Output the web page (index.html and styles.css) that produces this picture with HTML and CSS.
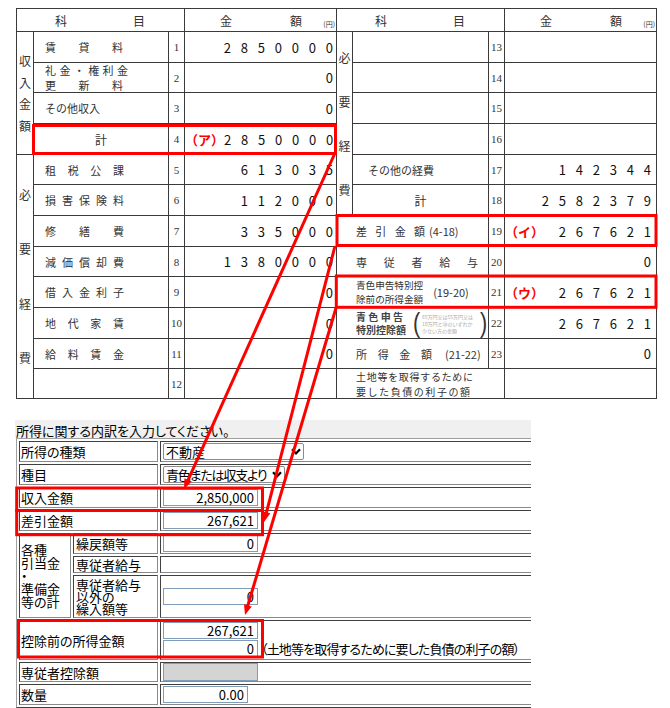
FILE: index.html
```html
<!DOCTYPE html>
<html lang="ja">
<head>
<meta charset="utf-8">
<title>所得の内訳</title>
<link rel="stylesheet" href="styles.css">
</head>
<body>
<div class="page">
  <div class="sheet">
    <!-- header -->
    <div class="hd s3 hk"><span class="jh">科目</span></div>
    <div class="hd ha"><span class="ja">金額</span><small>(円)</small></div>
    <div class="hd s3 hk"><span class="jh">科目</span></div>
    <div class="hd ha"><span class="ja">金額</span><small>(円)</small></div>

    <!-- row 1 / 13 -->
    <div class="vl vl4"><span>収</span><span>入</span><span>金</span><span>額</span></div>
    <div class="it"><span class="j w78">賃貸料</span></div>
    <div class="no">1</div>
    <div class="amt"><span class="d">2850000</span></div>
    <div class="vl vl6"><span>必</span><span>要</span><span>経</span><span>費</span></div>
    <div class="it"></div>
    <div class="no">13</div>
    <div class="amt r"></div>

    <!-- row 2 / 14 -->
    <div class="it two"><span class="j w83">礼金・権利金</span><span class="j w78">更新料</span></div>
    <div class="no">2</div>
    <div class="amt"><span class="d">0</span></div>
    <div class="it"></div>
    <div class="no">14</div>
    <div class="amt r"></div>

    <!-- row 3 / 15 -->
    <div class="it"><span>その他収入</span></div>
    <div class="no">3</div>
    <div class="amt"><span class="d">0</span></div>
    <div class="it"></div>
    <div class="no">15</div>
    <div class="amt r"></div>

    <!-- row 4 / 16 -->
    <div class="it c"><span>計</span></div>
    <div class="no">4</div>
    <div class="amt tag"><span class="t">（ア）</span><span class="d">2850000</span></div>
    <div class="it"></div>
    <div class="no">16</div>
    <div class="amt r"></div>

    <!-- row 5 / 17 -->
    <div class="vl vl8"><span>必</span><span>要</span><span>経</span><span>費</span></div>
    <div class="it"><span class="j w79">租税公課</span></div>
    <div class="no">5</div>
    <div class="amt"><span class="d">613035</span></div>
    <div class="it i17"><span>その他の経費</span></div>
    <div class="no">17</div>
    <div class="amt r"><span class="d">142344</span></div>

    <!-- row 6 / 18 -->
    <div class="it"><span class="j w79">損害保険料</span></div>
    <div class="no">6</div>
    <div class="amt"><span class="d">112000</span></div>
    <div class="it c"><span>計</span></div>
    <div class="no">18</div>
    <div class="amt r"><span class="d">2582379</span></div>

    <!-- row 7 / 19 -->
    <div class="it"><span class="j w79">修繕費</span></div>
    <div class="no">7</div>
    <div class="amt"><span class="d">335000</span></div>
    <div class="it s2 ir"><span class="j w69">差引金額</span><span class="pn">(4-18)</span></div>
    <div class="no">19</div>
    <div class="amt r tag"><span class="t">（イ）</span><span class="d">267621</span></div>

    <!-- row 8 / 20 -->
    <div class="it"><span class="j w79">減価償却費</span></div>
    <div class="no">8</div>
    <div class="amt"><span class="d">1380000</span></div>
    <div class="it s2 ir"><span class="j w122">専従者給与</span></div>
    <div class="no">20</div>
    <div class="amt r"><span class="d">0</span></div>

    <!-- row 9 / 21 -->
    <div class="it"><span class="j w79">借入金利子</span></div>
    <div class="no">9</div>
    <div class="amt"><span class="d">0</span></div>
    <div class="it s2 ir"><span class="sm2"><span>青色申告特別控</span><span>除前の所得金額</span></span><span class="pn p1920">(19-20)</span></div>
    <div class="no">21</div>
    <div class="amt r tag"><span class="t">（ウ）</span><span class="d">267621</span></div>

    <!-- row 10 / 22 -->
    <div class="it"><span class="j w79">地代家賃</span></div>
    <div class="no">10</div>
    <div class="amt"><span class="d">0</span></div>
    <div class="it s2 ir"><span class="sm3"><span class="j w47">青色申告</span><span class="j w47">特別控除額</span></span><span class="par pl">(</span><span class="tiny"><span>65万円又は55万円又は</span><span>10万円と⑳のいずれか</span><span>少ない方の金額</span></span><span class="par">)</span></div>
    <div class="no">22</div>
    <div class="amt r"><span class="d">267621</span></div>

    <!-- row 11 / 23 -->
    <div class="it"><span class="j w79">給料賃金</span></div>
    <div class="no">11</div>
    <div class="amt"><span class="d">0</span></div>
    <div class="it s2 ir"><span class="j w76">所得金額</span><span class="pn p2122">(21-22)</span></div>
    <div class="no">23</div>
    <div class="amt r"><span class="d">0</span></div>

    <!-- row 12 / land -->
    <div class="it"></div>
    <div class="no">12</div>
    <div class="amt"></div>
    <div class="it s3 ir"><span class="land"><span class="j w117">土地等を取得するために</span><span class="j w114">要した負債の利子の額</span></span></div>
    <div class="amt r"></div>
  </div>

  <div class="entry">
    <div class="cap">所得に関する内訳を入力してください。</div>
    <table class="form">
      <colgroup><col class="c1"><col class="c2"><col class="c3"></colgroup>
      <tr>
        <td colspan="2"><div class="lb h19">所得の種類</div></td>
        <td><div class="v h19"><div class="sel s141"><span>不動産</span><svg class="chev" width="10" height="7" viewBox="0 0 10 7"><polyline points="1,1.2 5,5.4 9,1.2"/></svg></div></div></td>
      </tr>
      <tr>
        <td colspan="2"><div class="lb h19">種目</div></td>
        <td><div class="v h19"><div class="sel s122"><span>青色または収支より</span><svg class="chev" width="10" height="7" viewBox="0 0 10 7"><polyline points="1,1.2 5,5.4 9,1.2"/></svg></div></div></td>
      </tr>
      <tr>
        <td colspan="2"><div class="lb h19">収入金額</div></td>
        <td><div class="v h19"><div class="inp">2,850,000</div></div></td>
      </tr>
      <tr>
        <td colspan="2"><div class="lb h19">差引金額</div></td>
        <td><div class="v h19"><div class="inp">267,621</div></div></td>
      </tr>
      <tr>
        <td rowspan="3" class="grp">各種<br>引当金<br>・<br>準備金<br>等の計</td>
        <td><div class="lb sub h19">繰戻額等</div></td>
        <td><div class="v h19"><div class="inp">0</div></div></td>
      </tr>
      <tr>
        <td><div class="lb sub h15">専従者給与</div></td>
        <td><div class="v h15"></div></td>
      </tr>
      <tr>
        <td><div class="lb sub ml h41">専従者給与<br>以外の<br>繰入額等</div></td>
        <td><div class="v h41"><div class="inp">0</div></div></td>
      </tr>
      <tr>
        <td colspan="2"><div class="lb h38">控除前の所得金額</div></td>
        <td><div class="vpair">
          <div class="inp">267,621</div>
          <div class="line2"><div class="inp">0</div><span class="note">（土地等を取得するために要した負債の利子の額）</span></div>
        </div></td>
      </tr>
      <tr>
        <td colspan="2"><div class="lb h18">専従者控除額</div></td>
        <td><div class="v h18"><div class="inp dis"></div></div></td>
      </tr>
      <tr>
        <td colspan="2"><div class="lb h19">数量</div></td>
        <td><div class="v h19"><div class="inp w85">0.00</div></div></td>
      </tr>
    </table>
  </div>
</div>

<svg class="marks" width="670" height="708" viewBox="0 0 670 708">
  <g fill="none" stroke="#ff0000" stroke-width="3">
    <rect x="33.5" y="125.5" width="302" height="28"/>
    <rect x="337" y="215.5" width="319" height="30"/>
    <rect x="336.3" y="276" width="319.7" height="31.3"/>
    <rect x="16.7" y="488" width="245.8" height="22.5"/>
    <rect x="16.7" y="510.5" width="245.8" height="24.2"/>
    <rect x="18.5" y="620.5" width="244" height="36.5"/>
    <line x1="335" y1="153" x2="186.46" y2="483.53"/>
    <line x1="335" y1="246" x2="265.49" y2="516.19"/>
    <line x1="336" y1="308" x2="246.71" y2="609.25"/>
  </g>
  <g fill="#ff0000">
    <polygon points="184,489 184.45,478.24 191.75,481.52"/>
    <polygon points="264,522 262.62,511.32 270.36,513.32"/>
    <polygon points="245,615 244,604.27 251.68,606.55"/>
  </g>
</svg>
</body>
</html>
```

FILE: styles.css
```css
* { box-sizing: border-box; }
html, body { margin: 0; padding: 0; background: #fff; }
body {
  width: 670px;
  height: 708px;
  overflow: hidden;
  position: relative;
  font-family: "Noto Sans CJK JP", "Noto Sans", sans-serif;
  color: #222;
}
.page { padding: 8px 0 0 16px; }

/* ---------- top sheet ---------- */
.sheet {
  display: grid;
  grid-template-columns: 16px 134px 15px 151px 15px 135px 15px 151px;
  grid-template-rows: 22px 30px 29px 30px 30px 29px 30px 30px 29px 30px 30px 29px 29px;
  gap: 1px;
  padding: 1px;
  width: 641px;
  background: #3a3a3a;
  font-size: 11px;
  color: #333;
}
.sheet > div {
  background: #fff;
  display: flex;
  align-items: center;
  min-width: 0;
  overflow: hidden;
  white-space: nowrap;
}
.s2 { grid-column: span 2; }
.s3 { grid-column: span 3; }

.j { display: block; text-align: justify; text-align-last: justify; }
.w47 { width: 47px; }
.w69 { width: 69px; }
.w76 { width: 76px; }
.w78 { width: 78px; }
.w79 { width: 79px; }
.w83 { width: 83px; }
.w114 { width: 114px; }
.w117 { width: 117px; }
.w122 { width: 122px; }

.hd { font-size: 12px; color: #333; }
.hk { padding-left: 38px; }
.jh { display: block; width: 90px; text-align-last: justify; }
.ha { padding-left: 35px; }
.ja { display: block; width: 82px; text-align-last: justify; }
.ha small {
  font-size: 7px;
  align-self: flex-end;
  margin: 0 1px 2px auto;
  line-height: 9px;
}

.vl {
  flex-direction: column;
  justify-content: center;
  font-size: 12px;
}
.vl span { display: block; text-align: center; width: 100%; }
.vl4 { grid-row: span 4; }
.vl4 span { line-height: 21.5px; }
.vl6 { grid-row: span 6; }
.vl6 span { line-height: 44px; }
.vl8 { grid-row: span 8; }
.vl8 span { line-height: 54.5px; }

.it { padding-left: 11px; }
.it.c { justify-content: center; padding-left: 0; font-size: 12px; }
.it.two { flex-direction: column; align-items: flex-start; justify-content: center; }
.it.two .j { line-height: 15px; }
.it.i17 { padding-left: 15px; }
.it.ir { padding-left: 19px; }
.pn { margin-left: 4px; font-size: 11px; }
.p1920 { margin-left: 10px; }
.p2122 { margin-left: 13px; }

.sm2 { display: flex; flex-direction: column; font-size: 9.6px; line-height: 14px; }
.sm3 { display: flex; flex-direction: column; font-size: 10px; line-height: 13px; font-weight: bold; color: #444; }
.par {
  font-family: "Liberation Sans", sans-serif;
  font-size: 27px;
  line-height: 28px;
  color: #333;
  transform: scaleX(0.8);
}
.par.pl { margin-left: 9px; }
.tiny {
  display: flex;
  flex-direction: column;
  width: 56px;
  font-size: 5px;
  line-height: 7px;
  color: #aaa;
  margin: 0 1px;
  overflow: hidden;
}
.land { display: flex; flex-direction: column; font-size: 10px; line-height: 15px; }

.no {
  justify-content: center;
  font-family: "Liberation Serif", serif;
  font-size: 11px;
  color: #333;
}

.amt {
  justify-content: flex-end;
  padding-right: 3px;
  font-size: 13px;
  color: #111;
}
.amt.r { padding-right: 5px; }
.amt .d { letter-spacing: 9.8px; margin-right: -9.8px; }
.amt.tag { justify-content: space-between; }
.amt .t { color: #ff0000; font-weight: bold; font-size: 13px; }

/* ---------- entry form ---------- */
.entry {
  width: 516px;
  margin: 21px 0 0 -1px;
  overflow: hidden;
  font-size: 13px;
  font-feature-settings: "palt";
  color: #000;
}
.cap {
  height: 18px;
  padding: 4px 0 0 1px;
  line-height: 14px;
  background: #f0f0f0;
  white-space: nowrap;
}
table.form {
  margin-left: 1px;
  border-collapse: separate;
  border-spacing: 2px;
  border: 1px solid;
  border-color: #a0a0a0 #404040 #404040 #a0a0a0;
  table-layout: fixed;
  width: 545px;
}
col.c1 { width: 52px; }
col.c2 { width: 85px; }
table.form td {
  border: 1px solid;
  border-color: #404040 #8a8a8a #8a8a8a #404040;
  padding: 0 0 0 1px;
  vertical-align: middle;
  line-height: 13px;
}
.lb { display: flex; align-items: center; white-space: nowrap; }
.lb.sub { padding-left: 1px; }
.lb.ml { line-height: 12px; }
.grp { line-height: 13px; }
.h15 { height: 15px; }
.h18 { height: 18px; }
.h19 { height: 19px; }
.h38 { height: 38px; }
.h41 { height: 41px; }
.v { display: flex; align-items: center; padding-left: 1px; }
.vpair { height: 38px; padding: 1px 0 0 1px; display: flex; flex-direction: column; gap: 1px; }
.line2 { display: flex; align-items: center; }
.note { white-space: nowrap; margin-left: 3px; line-height: 15px; letter-spacing: -0.85px; }

.inp {
  width: 95px;
  height: 17px;
  border: 1px solid #7f9db9;
  background: #fff;
  text-align: right;
  padding-right: 3px;
  line-height: 15px;
  font-size: 13px;
  flex: none;
}
.inp.w85 { width: 85px; }
.inp.dis { background: #d4d4d4; height: 18px; }

.sel {
  display: flex;
  align-items: center;
  justify-content: space-between;
  height: 17px;
  border: 1px solid #8c8c8c;
  border-radius: 2px;
  padding: 0 2px 0 2px;
  background: #fff;
  line-height: 15px;
  white-space: nowrap;
  overflow: hidden;
}
.s141 { width: 141px; }
.s122 { width: 122px; }
.s122 span { letter-spacing: -1.2px; }
.chev { flex: none; }
.chev polyline { fill: none; stroke: #000; stroke-width: 2.2; }

/* ---------- annotation overlay ---------- */
.marks {
  position: absolute;
  left: 0;
  top: 0;
  pointer-events: none;
}
```
